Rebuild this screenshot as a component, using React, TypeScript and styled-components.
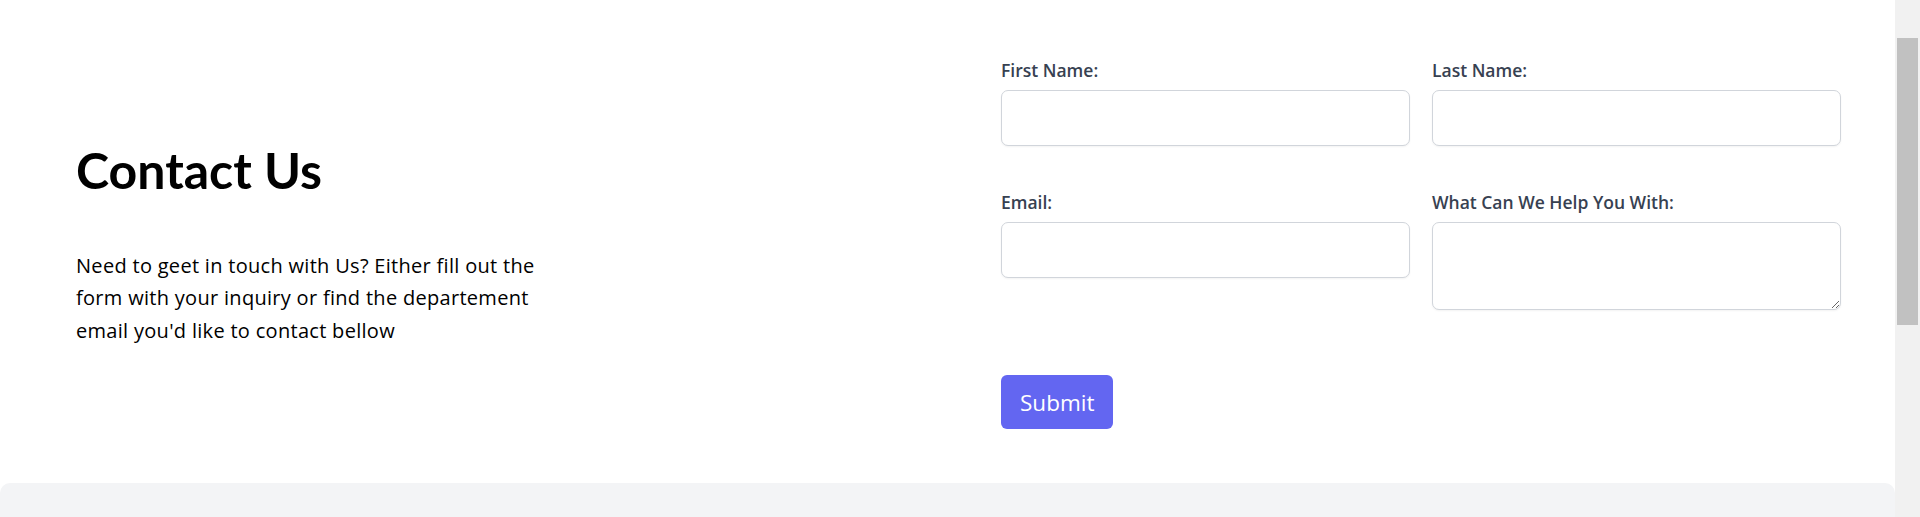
import styled, { createGlobalStyle } from "styled-components";

const GlobalStyle = createGlobalStyle`
  html,
  body {
    margin: 0;
    overflow: hidden;
  }

  body {
    background: #ffffff;
    font-family: "Open Sans", Lato, sans-serif;
  }
`;

const Layout = styled.div`
  display: flex;
  height: 100vh;
  overflow: hidden;
`;

const Page = styled.main`
  flex: 1;
  min-width: 0;
`;

const ScrollTrack = styled.div`
  width: 25px;
  flex-shrink: 0;
  box-sizing: border-box;
  padding: 38px 2px 0 2px;
  background: #f1f1f1;
`;

const ScrollThumb = styled.div`
  height: 287px;
  background: #c1c1c1;
`;

const Section = styled.section`
  display: grid;
  grid-template-columns: 1fr 840px;
  align-items: center;
  padding: 58px 54px 54px 76px;
`;

const Intro = styled.div`
  display: flex;
  flex-direction: column;
  gap: 50px;
`;

const Title = styled.h1`
  margin: 0;
  font-family: Lato, "Open Sans", sans-serif;
  font-size: 50px;
  line-height: 60px;
  font-weight: 700;
  color: #000000;
`;

const Lead = styled.p`
  margin: 0;
  max-width: 480px;
  font-size: 20px;
  line-height: 32.5px;
  letter-spacing: 0.3px;
  color: #000000;
`;

const Form = styled.form`
  display: grid;
  grid-template-columns: 409px 409px;
  column-gap: 22px;
  row-gap: 44px;
`;

const Field = styled.div`
  display: flex;
  flex-direction: column;
  gap: 7px;
`;

const Label = styled.label`
  font-size: 17.5px;
  line-height: 25px;
  font-weight: 550;
  color: #374151;
`;

const Input = styled.input`
  box-sizing: border-box;
  width: 100%;
  height: 56px;
  padding: 0 14px;
  border: 1px solid #d1d5db;
  border-radius: 7px;
  box-shadow: 0 1px 2px rgba(0, 0, 0, 0.05);
  font: inherit;
  background: #ffffff;
`;

const TextArea = styled.textarea`
  display: block;
  box-sizing: border-box;
  width: 100%;
  height: 88px;
  padding: 10px 14px;
  border: 1px solid #d1d5db;
  border-radius: 7px;
  box-shadow: 0 1px 2px rgba(0, 0, 0, 0.05);
  font: inherit;
  resize: vertical;
`;

const Actions = styled.div`
  grid-column: 1 / -1;
  margin-top: 21px;
`;

const SubmitButton = styled.button`
  height: 54px;
  padding: 0 19px;
  border: none;
  border-radius: 6px;
  background: #6366f1;
  color: #ffffff;
  font-family: inherit;
  font-size: 22.5px;
  cursor: pointer;
`;

const Footer = styled.div`
  height: 380px;
  background: #f3f4f6;
  border-radius: 10px 10px 0 0;
`;

function App() {
  return (
    <Layout>
      <GlobalStyle />
      <Page>
        <Section>
          <Intro>
            <Title>Contact Us</Title>
            <Lead>
              Need to geet in touch with Us? Either fill out the form with your
              inquiry or find the departement email you'd like to contact bellow
            </Lead>
          </Intro>
          <Form onSubmit={(e) => e.preventDefault()}>
            <Field>
              <Label htmlFor="first-name">First Name:</Label>
              <Input id="first-name" type="text" />
            </Field>
            <Field>
              <Label htmlFor="last-name">Last Name:</Label>
              <Input id="last-name" type="text" />
            </Field>
            <Field>
              <Label htmlFor="email">Email:</Label>
              <Input id="email" type="email" />
            </Field>
            <Field>
              <Label htmlFor="help">What Can We Help You With:</Label>
              <TextArea id="help" />
            </Field>
            <Actions>
              <SubmitButton type="submit">Submit</SubmitButton>
            </Actions>
          </Form>
        </Section>
        <Footer />
      </Page>
      <ScrollTrack>
        <ScrollThumb />
      </ScrollTrack>
    </Layout>
  );
}

export default App;
